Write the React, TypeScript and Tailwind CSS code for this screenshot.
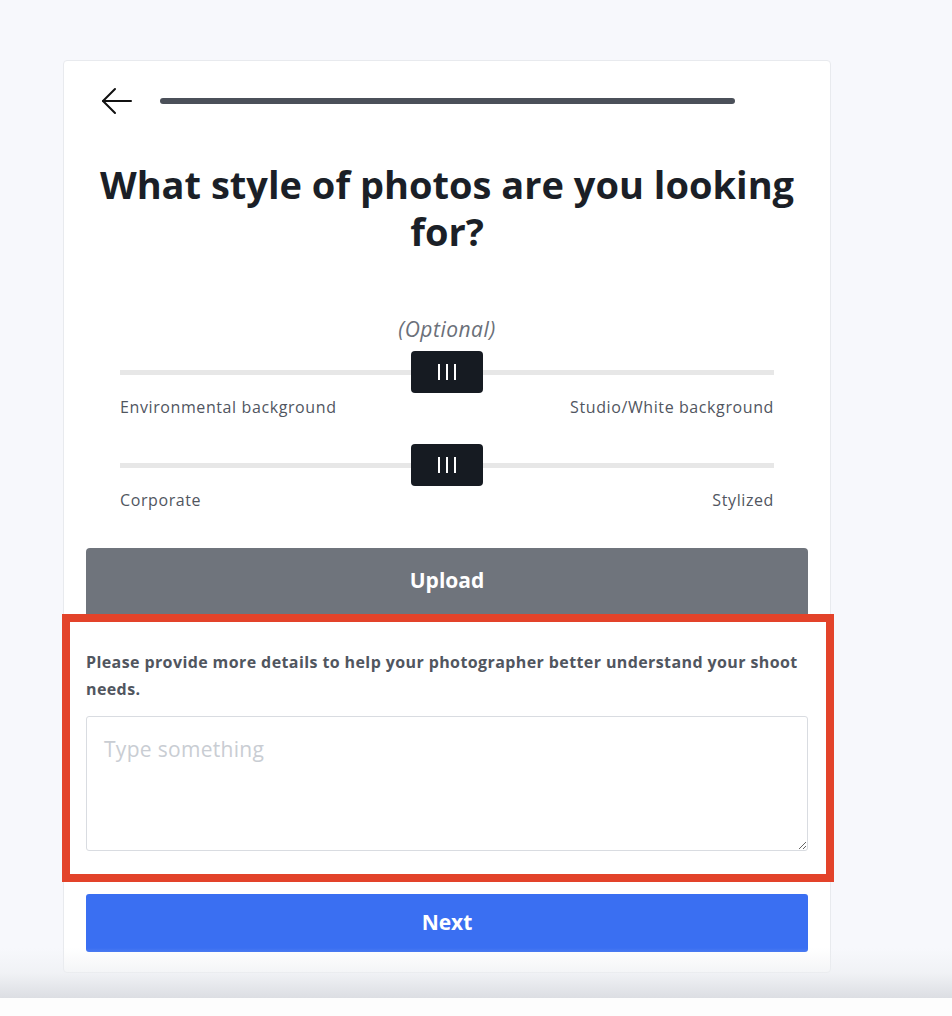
import { useState } from 'react'

function Thumb() {
  return (
    <div className="w-[72px] h-[42px] shrink-0 rounded-[4px] bg-[#161b22] flex items-center justify-center gap-[6px]">
      <span className="w-[2px] h-[16px] bg-white" />
      <span className="w-[2px] h-[16px] bg-white" />
      <span className="w-[2px] h-[16px] bg-white" />
    </div>
  )
}

function Slider({ left, right }: { left: string; right: string }) {
  return (
    <div className="px-[34px]">
      <div className="flex items-center">
        <div className="flex-1 h-[5px] bg-[#e7e7e7]" />
        <Thumb />
        <div className="flex-1 h-[5px] bg-[#e7e7e7]" />
      </div>
      <div className="mt-[2px] flex justify-between text-[16px] leading-[24px] tracking-[0.6px] text-[#51565f]">
        <span>{left}</span>
        <span>{right}</span>
      </div>
    </div>
  )
}

export default function App() {
  const [details, setDetails] = useState('')

  return (
    <div className="h-[1016px] flex flex-col bg-white" style={{ fontFamily: '"Open Sans", Lato, sans-serif' }}>
      <div className="relative h-[998px] bg-[#f7f8fc] overflow-hidden pt-[60px] pl-[63px]">
        <div className="w-[768px] bg-white border border-[#e8eaee] rounded-[4px] px-[22px] pt-[27px] pb-[20px]">
          {/* top bar */}
          <div className="flex items-center h-[26px] pl-[15px]">
            <svg width="32" height="28" viewBox="0 0 32 28" fill="none" stroke="#111" strokeWidth="2" strokeLinecap="round" strokeLinejoin="round">
              <path d="M30 14H2" />
              <path d="M14 2 2 14l12 12" />
            </svg>
            <div className="ml-[27px] w-[575px] h-[6px] rounded-full bg-[#4b5059]" />
          </div>

          <h1 className="mt-[47px] text-center text-[38px] leading-[47px] font-bold text-[#1b1f27] px-[10px]">
            What style of photos are you looking for?
          </h1>

          <p className="mt-[60px] text-center text-[21px] leading-[28px] italic tracking-[0.5px] text-[#6b7079]">(Optional)</p>

          <div className="mt-[8px]">
            <Slider left="Environmental background" right="Studio/White background" />
          </div>
          <div className="mt-[25px]">
            <Slider left="Corporate" right="Stylized" />
          </div>

          <button className="mt-[36px] w-full h-[66px] rounded-t-[4px] bg-[#6f747c] text-white text-[21px] font-bold">
            Upload
          </button>

          {/* highlighted section */}
          <div className="relative -ml-[24px] -mr-[26px] border-[8px] border-[#e3432a] bg-white pl-[16px] pr-[18px] pt-[27px] pb-[23px]">
            <p className="text-[16px] leading-[27px] font-bold tracking-[0.4px] text-[#51565f]">
              Please provide more details to help your photographer better understand your shoot needs.
            </p>
            <textarea
              value={details}
              onChange={(e) => setDetails(e.target.value)}
              placeholder="Type something"
              className="mt-[13px] block w-full h-[135px] rounded-[3px] border border-[#d9dce1] px-[17px] pt-[20px] text-[21px] leading-[24px] tracking-[0.3px] text-[#333] placeholder:text-[#c9cdd3] outline-none"
            />
          </div>

          <button className="mt-[12px] w-full h-[58px] rounded-[3px] bg-[#3a6ff2] text-white text-[21px] font-bold">
            Next
          </button>
        </div>

        {/* bottom fade */}
        <div className="absolute left-0 right-0 bottom-0 h-[50px] bg-gradient-to-b from-transparent via-[#eceef1]/60 to-[#dcdee3] pointer-events-none" />
      </div>
      <div className="h-[18px] bg-[#fdfdfd]" />
    </div>
  )
}
